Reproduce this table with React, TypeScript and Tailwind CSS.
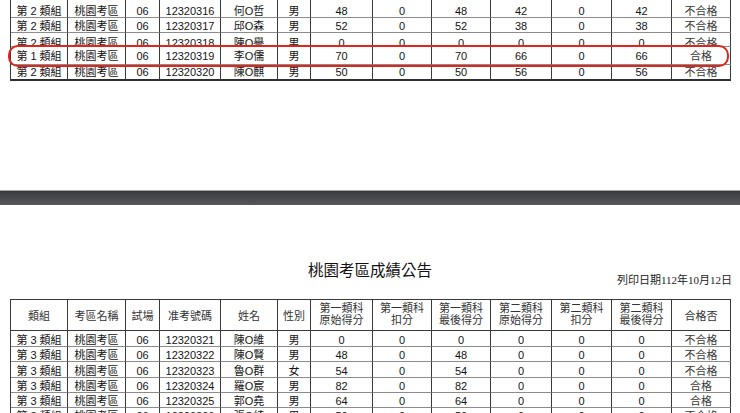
import clsx from 'clsx'
import type { ReactNode } from 'react'

const COLS = 'grid grid-cols-[57px_58px_34px_61px_57px_33px_62px_59px_59px_61px_60px_60px_59px]'
const SANS = "[font-family:'Liberation_Sans','Noto_Sans_CJK_TC',sans-serif]"
const MING = "[font-family:'Liberation_Serif','Noto_Sans_CJK_TC',serif]"

const topRows = [
  { h: 'h-[18px]', pt: 'pt-[5px]', cells: ['第 2 類組', '桃園考區', '06', '12320316', '何O哲', '男', '48', '0', '48', '42', '0', '42', '不合格'] },
  { h: 'h-[15px]', pt: 'pt-[2px]', cells: ['第 2 類組', '桃園考區', '06', '12320317', '邱O森', '男', '52', '0', '52', '38', '0', '38', '不合格'] },
  { h: 'h-[14px]', pt: 'pt-[4px]', cells: ['第 2 類組', '桃園考區', '06', '12320318', '陳O譽', '男', '0', '0', '0', '0', '0', '0', '不合格'] },
  { h: 'h-[18px]', pt: 'pt-[3px]', cells: ['第 1 類組', '桃園考區', '06', '12320319', '李O儒', '男', '70', '0', '70', '66', '0', '66', '合格'] },
  { h: 'h-[16px]', pt: 'pt-[1px]', cells: ['第 2 類組', '桃園考區', '06', '12320320', '陳O麒', '男', '50', '0', '50', '56', '0', '56', '不合格'], last: true },
]

const bottomRows = [
  { h: 'h-[16px]', pt: 'pt-[3px]', cells: ['第 3 類組', '桃園考區', '06', '12320321', '陳O維', '男', '0', '0', '0', '0', '0', '0', '不合格'] },
  { h: 'h-[15px]', pt: 'pt-[2px]', cells: ['第 3 類組', '桃園考區', '06', '12320322', '陳O賢', '男', '48', '0', '48', '0', '0', '0', '不合格'] },
  { h: 'h-[16px]', pt: 'pt-[3px]', cells: ['第 3 類組', '桃園考區', '06', '12320323', '魯O群', '女', '54', '0', '54', '0', '0', '0', '不合格'] },
  { h: 'h-[15px]', pt: 'pt-[2px]', cells: ['第 3 類組', '桃園考區', '06', '12320324', '羅O宸', '男', '82', '0', '82', '0', '0', '0', '合格'] },
  { h: 'h-[15px]', pt: 'pt-[2px]', cells: ['第 3 類組', '桃園考區', '06', '12320325', '郭O堯', '男', '64', '0', '64', '0', '0', '0', '合格'] },
  { h: 'h-[15px]', pt: 'pt-[2px]', cells: ['第 3 類組', '桃園考區', '06', '12320326', '張O綺', '男', '50', '0', '50', '0', '0', '0', '不合格'] },
]

const headers: (string | [string, string])[] = [
  '類組', '考區名稱', '試場', '准考號碼', '姓名', '性別',
  ['第一類科', '原始得分'], ['第一類科', '扣分'], ['第一類科', '最後得分'],
  ['第二類科', '原始得分'], ['第二類科', '扣分'], ['第二類科', '最後得分'],
  '合格否',
]

function ScoreRow({ cells, h, pt, last }: { cells: string[]; h: string; pt: string; last?: boolean }) {
  return (
    <div className={clsx(COLS, h)}>
      {cells.map((c, i) => (
        <div
          key={i}
          className={clsx(
            'flex justify-center overflow-hidden whitespace-nowrap text-[11px] leading-[13px] border-r border-b border-r-[#3a3a3a]',
            pt,
            last ? 'border-b-2 border-b-[#2e2e2e]' : 'border-b-[#8c8c8c]',
            i === 12 ? clsx(MING, 'text-[#3a3a3a]') : 'text-[#141414]',
          )}
        >
          {c}
        </div>
      ))}
    </div>
  )
}

function HeaderCell({ label }: { label: string | [string, string] }) {
  const two = Array.isArray(label)
  return (
    <div
      className={clsx(
        'flex flex-col items-center justify-center border-r border-b border-r-[#3a3a3a] border-b-[#3a3a3a] text-[11px] text-[#333]',
        MING,
        two ? 'leading-[12px] pb-[2px]' : 'leading-[13px] pt-[3px]',
      )}
    >
      {two ? (
        <>
          <span>{label[0]}</span>
          <span>{label[1]}</span>
        </>
      ) : (
        <span>{label as ReactNode}</span>
      )}
    </div>
  )
}

export default function App() {
  return (
    <div className={clsx('w-[740px] h-[413px] overflow-hidden bg-white', SANS)}>
      {/* 上一頁底部 */}
      <div className="relative h-[190px] overflow-hidden">
        <div className="ml-[10px] w-[721px] border-l border-l-[#3a3a3a]">
          {topRows.map((r, i) => (
            <ScoreRow key={i} {...r} />
          ))}
        </div>
        <div className="absolute left-[8px] top-[45px] h-[22px] w-[721px] rounded-[10px] border-2 border-[#e3241b]" />
      </div>

      {/* 頁面分隔 */}
      <div className="h-[15px] border-t border-t-[#a3a3a3] bg-linear-to-b from-[#3a3b3e] to-[#57585c]" />

      {/* 下一頁 */}
      <div className="h-[208px] overflow-hidden">
        <div className="grid h-[26px] grid-cols-[1fr_auto_1fr] mt-[56px]">
          <div />
          <div className="self-start text-[15.5px] leading-[20px] text-[#111]">桃園考區成績公告</div>
          <div className={clsx('self-end justify-self-end pr-[8px] text-[11px] leading-[14px] text-[#222]', MING)}>
            列印日期112年10月12日
          </div>
        </div>
        <div className="ml-[10px] mt-[12px] w-[721px] border-l border-t border-l-[#3a3a3a] border-t-[#3a3a3a]">
          <div className={clsx(COLS, 'h-[31px]')}>
            {headers.map((l, i) => (
              <HeaderCell key={i} label={l} />
            ))}
          </div>
          {bottomRows.map((r, i) => (
            <ScoreRow key={i} {...r} />
          ))}
        </div>
      </div>
    </div>
  )
}
